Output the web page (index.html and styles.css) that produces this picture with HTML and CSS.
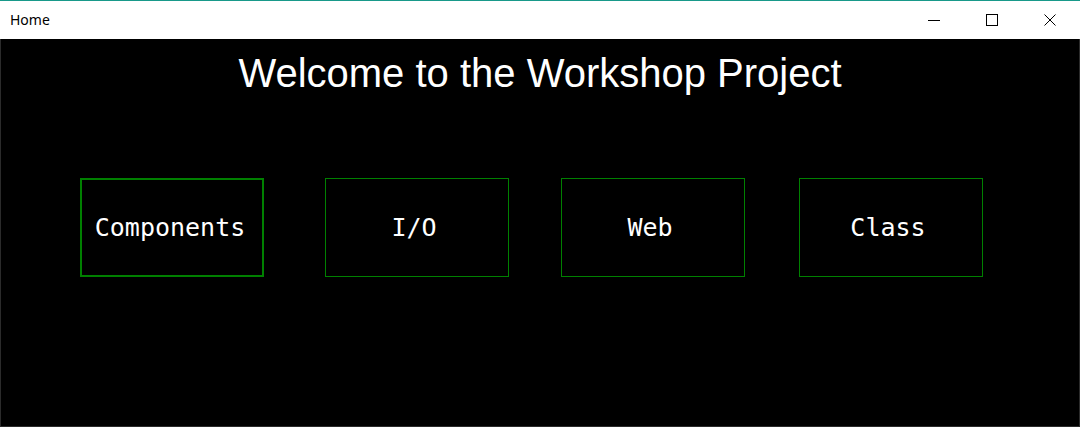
FILE: index.html
```html
<!DOCTYPE html>
<html>
<head>
<meta charset="utf-8">
<link rel="stylesheet" href="styles.css">
</head>
<body>
<div class="window">
  <div class="titlebar">
    <span class="title">Home</span>
    <div class="controls">
      <div class="ctrl"><svg width="12" height="12" viewBox="0 0 12 12"><path d="M0 6.5h12" stroke="#000" stroke-width="1"/></svg></div>
      <div class="ctrl"><svg width="12" height="12" viewBox="0 0 12 12"><rect x="0.5" y="0.5" width="11" height="11" fill="none" stroke="#000" stroke-width="1"/></svg></div>
      <div class="ctrl"><svg width="12" height="12" viewBox="0 0 12 12"><path d="M0.5 0.5L11.5 11.5M11.5 0.5L0.5 11.5" stroke="#000" stroke-width="1"/></svg></div>
    </div>
  </div>
  <div class="content">
    <h1 class="heading">Welcome to the Workshop Project</h1>
    <div class="buttons">
      <div class="btn focused c1">Components</div>
      <div class="btn c2">I/O</div>
      <div class="btn c3">Web</div>
      <div class="btn c4">Class</div>
    </div>
  </div>
</div>
</body>
</html>
```
FILE: styles.css
```css
html, body {
  margin: 0;
  padding: 0;
  width: 1080px;
  height: 427px;
  overflow: hidden;
  background: #fff;
}
.window {
  width: 1080px;
  height: 427px;
  display: flex;
  flex-direction: column;
  box-sizing: border-box;
}
.titlebar {
  height: 39px;
  flex: none;
  box-sizing: border-box;
  border-top: 1px solid #18998a;
  background: #fff;
  display: flex;
  align-items: center;
  justify-content: space-between;
}
.title {
  font-family: "Noto Sans", "Open Sans", sans-serif;
  font-size: 14px;
  color: #000;
  padding-left: 10px;
  padding-bottom: 1px;
}
.controls {
  display: flex;
  height: 100%;
  padding-right: 1px;
}
.ctrl {
  width: 58px;
  display: flex;
  align-items: center;
  justify-content: center;
}
.ctrl svg { display: block; }
.content {
  flex: 1;
  background: #000;
  border: 1px solid #2b2b2b;
  border-top: none;
  display: flex;
  flex-direction: column;
}
.heading {
  margin: 11px 0 0 0;
  font-family: "Liberation Sans", Arial, sans-serif;
  font-weight: normal;
  font-size: 40px;
  line-height: 46px;
  color: #fff;
  text-align: center;
}
.buttons {
  margin-top: 82px;
  display: grid;
  grid-template-columns: 79px 184px 61px 184px 52px 184px 54px 184px;
  grid-template-rows: 99px;
}
.btn {
  box-sizing: border-box;
  border: 1px solid #008000;
  display: flex;
  align-items: center;
  justify-content: center;
  font-family: "DejaVu Sans Mono", "Liberation Mono", monospace;
  font-size: 25px;
  color: #fff;
  padding-right: 6px;
}
.btn.focused { border-width: 2px; padding-right: 4px; }
.c1 { grid-column: 2; }
.c2 { grid-column: 4; }
.c3 { grid-column: 6; }
.c4 { grid-column: 8; }
```
